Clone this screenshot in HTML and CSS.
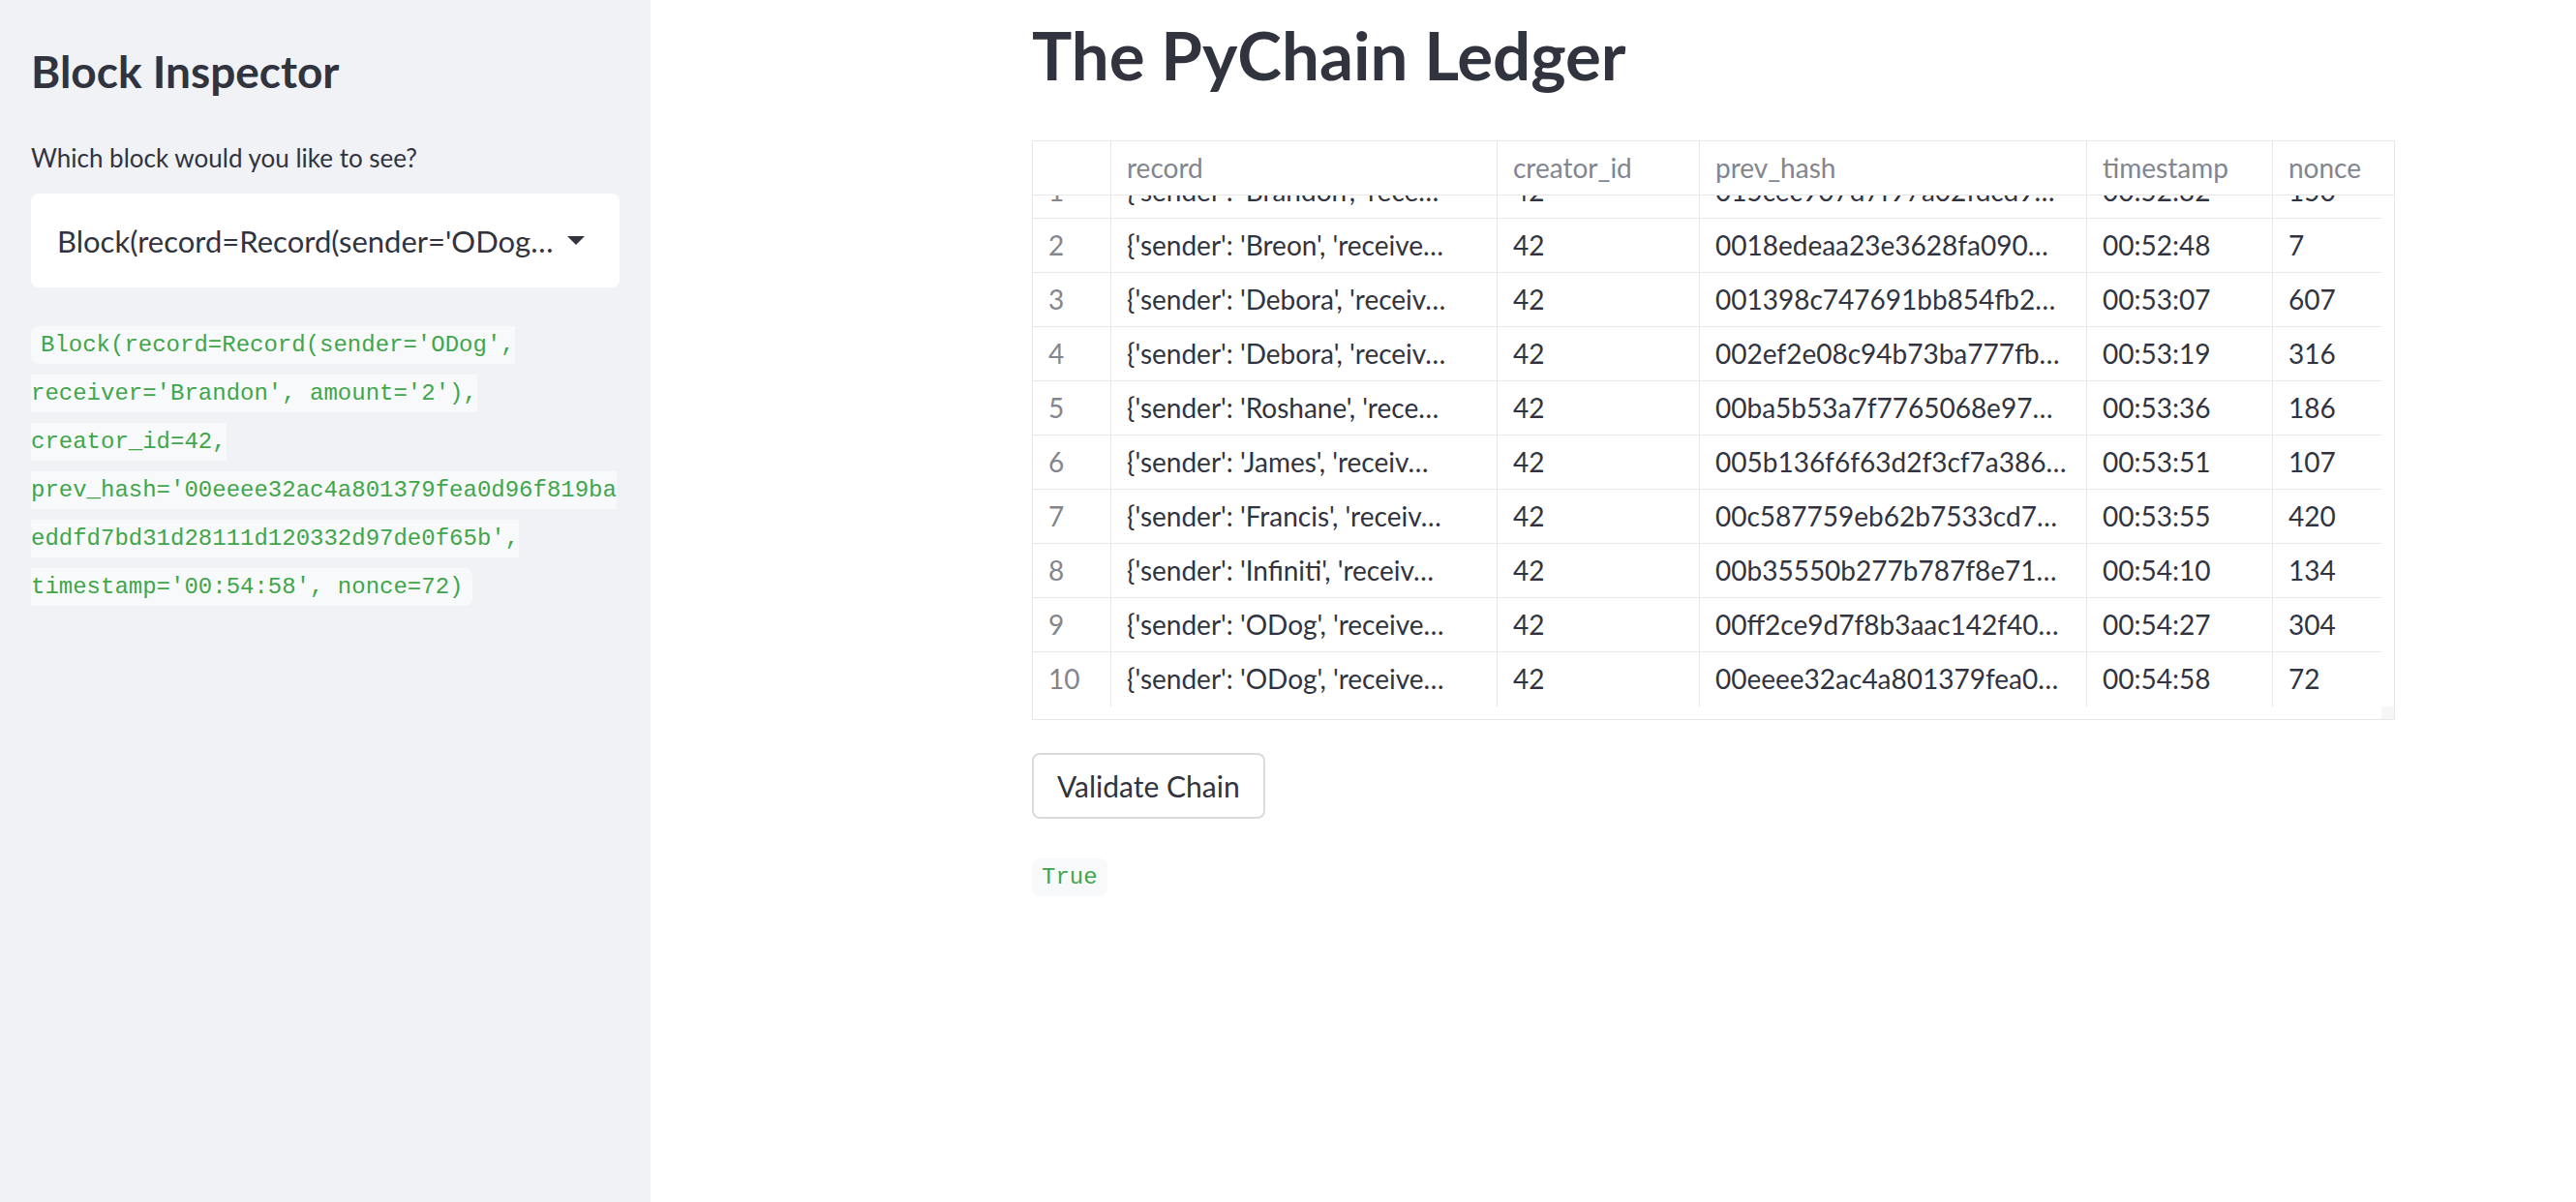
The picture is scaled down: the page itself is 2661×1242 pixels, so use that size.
FILE: index.html
```html
<!DOCTYPE html>
<html lang="en">
<head>
<meta charset="utf-8">
<title>The PyChain Ledger</title>
<link rel="stylesheet" href="styles.css">
</head>
<body>
<div class="app">
  <aside class="sidebar">
    <h2 class="side-title">Block Inspector</h2>
    <div class="field-label">Which block would you like to see?</div>
    <div class="select">
      <span class="select-value">Block(record=Record(sender='ODog…</span>
      <svg class="caret" width="18" height="9" viewBox="0 0 18 9"><polygon points="0,0 18,0 9,9" fill="#31333F"/></svg>
    </div>
    <p class="block-text"><code class="inline-code">Block(record=Record(sender='ODog', receiver='Brandon', amount='2'), creator_id=42, prev_hash='00eeee32ac4a801379fea0d96f819baeddfd7bd31d28111d120332d97de0f65b', timestamp='00:54:58', nonce=72)</code></p>
  </aside>
  <main class="main">
    <h1 class="title">The PyChain Ledger</h1>
    <div class="grid">
      <div class="grid-head">
        <div class="hcell"></div>
        <div class="hcell">record</div>
        <div class="hcell">creator_id</div>
        <div class="hcell">prev_hash</div>
        <div class="hcell">timestamp</div>
        <div class="hcell last">nonce</div>
      </div>
      <div class="grid-body">
        <div class="rows-window">
          <div class="rows">
            <div class="row"><div class="cell idx">1</div><div class="cell">{'sender': 'Brandon', 'rece…</div><div class="cell">42</div><div class="cell">015cec907d7f97a02fdcd9…</div><div class="cell">00:52:32</div><div class="cell last">150</div></div>
            <div class="row"><div class="cell idx">2</div><div class="cell">{'sender': 'Breon', 'receive…</div><div class="cell">42</div><div class="cell">0018edeaa23e3628fa090…</div><div class="cell">00:52:48</div><div class="cell last">7</div></div>
            <div class="row"><div class="cell idx">3</div><div class="cell">{'sender': 'Debora', 'receiv…</div><div class="cell">42</div><div class="cell">001398c747691bb854fb2…</div><div class="cell">00:53:07</div><div class="cell last">607</div></div>
            <div class="row"><div class="cell idx">4</div><div class="cell">{'sender': 'Debora', 'receiv…</div><div class="cell">42</div><div class="cell">002ef2e08c94b73ba777fb…</div><div class="cell">00:53:19</div><div class="cell last">316</div></div>
            <div class="row"><div class="cell idx">5</div><div class="cell">{'sender': 'Roshane', 'rece…</div><div class="cell">42</div><div class="cell">00ba5b53a7f7765068e97…</div><div class="cell">00:53:36</div><div class="cell last">186</div></div>
            <div class="row"><div class="cell idx">6</div><div class="cell">{'sender': 'James', 'receiv…</div><div class="cell">42</div><div class="cell">005b136f6f63d2f3cf7a386…</div><div class="cell">00:53:51</div><div class="cell last">107</div></div>
            <div class="row"><div class="cell idx">7</div><div class="cell">{'sender': 'Francis', 'receiv…</div><div class="cell">42</div><div class="cell">00c587759eb62b7533cd7…</div><div class="cell">00:53:55</div><div class="cell last">420</div></div>
            <div class="row"><div class="cell idx">8</div><div class="cell">{'sender': 'Infiniti', 'receiv…</div><div class="cell">42</div><div class="cell">00b35550b277b787f8e71…</div><div class="cell">00:54:10</div><div class="cell last">134</div></div>
            <div class="row"><div class="cell idx">9</div><div class="cell">{'sender': 'ODog', 'receive…</div><div class="cell">42</div><div class="cell">00ff2ce9d7f8b3aac142f40…</div><div class="cell">00:54:27</div><div class="cell last">304</div></div>
            <div class="row final"><div class="cell idx">10</div><div class="cell">{'sender': 'ODog', 'receive…</div><div class="cell">42</div><div class="cell">00eeee32ac4a801379fea0…</div><div class="cell">00:54:58</div><div class="cell last">72</div></div>
          </div>
        </div>
        <div class="vtrack"></div>
        <div class="htrack"></div>
        <div class="corner"></div>
      </div>
    </div>
    <button class="btn" type="button">Validate Chain</button>
    <p class="result"><code class="inline-code">True</code></p>
  </main>
</div>
</body>
</html>
```

FILE: styles.css
```css
* { box-sizing: border-box; }
html, body { margin: 0; padding: 0; }
body {
  font-family: Lato, "Noto Sans", sans-serif;
  color: #31333F;
  background: #ffffff;
}
.app {
  display: flex;
  min-height: 1242px;
}
.sidebar {
  flex: none;
  width: 672px;
  background: #F0F2F6;
  padding: 0 32px;
}
.side-title {
  margin: 0;
  padding-top: 45px;
  font-size: 46px;
  line-height: 58px;
  font-weight: 700;
}
.field-label {
  margin-top: 40px;
  font-size: 26px;
  line-height: 40px;
}
.select {
  margin-top: 17px;
  height: 97px;
  background: #ffffff;
  border-radius: 8px;
  display: flex;
  align-items: center;
  justify-content: space-between;
  padding: 0 36px 0 27px;
}
.select-value {
  font-size: 31px;
  white-space: nowrap;
  overflow: hidden;
}
.caret { flex: none; }
.block-text {
  margin: 29px 0 0;
  font-size: 32px;
  line-height: 50px;
  overflow-wrap: break-word;
}
.inline-code {
  font-family: "Liberation Mono", "DejaVu Sans Mono", monospace;
  font-size: 24px;
  line-height: 1;
  color: #3fa64a;
  background: #F8F9FB;
  padding: 6px 10px;
  border-radius: 8px;
  -webkit-box-decoration-break: slice;
  box-decoration-break: slice;
}
.main {
  flex: 1;
  padding-left: 394px;
}
.title {
  margin: 0;
  padding-top: 12px;
  font-size: 69px;
  line-height: 90px;
  font-weight: 700;
}
.grid {
  margin-top: 43px;
  width: 1408px;
  border: 1px solid #e7e7e9;
  background: #ffffff;
}
.grid-head {
  display: grid;
  grid-template-columns: 81px 399px 209px 400px 192px 125px;
  height: 56px;
  border-bottom: 1px solid #e7e7e9;
}
.hcell {
  border-right: 1px solid #e7e7e9;
  padding: 0 16px;
  font-size: 28px;
  line-height: 55px;
  color: #83858f;
  white-space: nowrap;
  overflow: hidden;
}
.hcell.last { border-right: none; }
.grid-body {
  display: grid;
  grid-template-columns: 1393px 13px;
  grid-template-rows: 528px 13px;
}
.rows-window {
  overflow: hidden;
}
.rows {
  margin-top: -32px;
}
.row {
  display: grid;
  grid-template-columns: 81px 399px 209px 400px 192px 112px;
  height: 56px;
  border-bottom: 1px solid #e7e7e9;
}
.row.final { border-bottom: none; }
.cell {
  border-right: 1px solid #e7e7e9;
  padding: 0 16px;
  font-size: 28px;
  line-height: 55px;
  white-space: nowrap;
  overflow: hidden;
  text-overflow: ellipsis;
}
.cell.idx { color: #83858f; }
.cell.last { border-right: none; }
.corner { background: #f6f6f7; }
.btn {
  display: block;
  margin-top: 34px;
  height: 68px;
  padding: 0 24px;
  background: #ffffff;
  border: 2px solid #dadadd;
  border-radius: 8px;
  font-family: inherit;
  font-size: 30px;
  color: #31333F;
}
.result {
  margin: 30px 0 0;
  font-size: 32px;
  line-height: 50px;
}
```
